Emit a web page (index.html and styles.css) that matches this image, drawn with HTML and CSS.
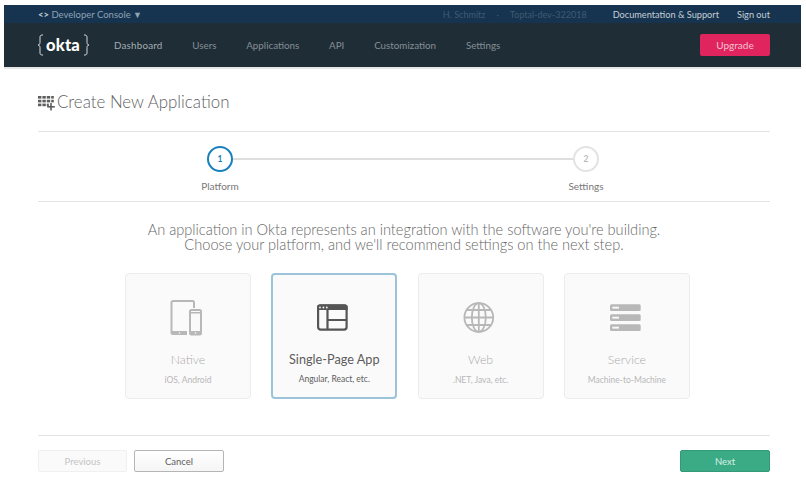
FILE: index.html
```html
<!DOCTYPE html>
<html lang="en">
<head>
<meta charset="utf-8">
<title>Create New Application</title>
<link rel="stylesheet" href="styles.css">
</head>
<body>
<header class="header">
  <div class="topbar">
    <div class="console"><span class="code">&lt;&gt;</span> Developer Console <span class="caret">▼</span></div>
    <div class="org"><span>H. Schmitz</span><span>·</span><span>Toptal-dev-322018</span></div>
    <a class="toplink toplink-docs">Documentation &amp; Support</a>
    <a class="toplink">Sign out</a>
  </div>
  <div class="mainbar">
    <div class="logo">
      <svg class="brace" width="7" height="22" viewBox="0 0 7 22"><path d="M6 1H5C3.800 1 3 1.800 3 3v5.500C3 10 2.200 11 1 11c1.200 0 2 1 2 2.500V19c0 1.200.8 2 2 2h1" fill="none" stroke="#e8ecee" stroke-width=".9"/></svg>
      <span class="logotext">okta</span>
      <svg class="brace" width="7" height="22" viewBox="0 0 7 22"><path d="M1 1h1c1.200 0 2 .8 2 2v5.500C4 10 4.800 11 6 11c-1.200 0-2 1-2 2.500V19c0 1.200-.8 2-2 2H1" fill="none" stroke="#e8ecee" stroke-width=".9"/></svg>
    </div>
    <nav class="nav">
      <a class="nav-first">Dashboard</a><a class="dim">Users</a><a class="dim">Applications</a><a class="dim">API</a><a class="dim">Customization</a><a class="dim">Settings</a>
    </nav>
    <a class="upgrade">Upgrade</a>
  </div>
</header>
<main class="page">
  <h1 class="title">
    <svg class="title-icon" width="17" height="16" viewBox="0 0 17 16"><g fill="#5d5d5d"><rect x="0" y="1" width="3.400" height="2.600"/><rect x="4.400" y="1" width="3.400" height="2.600"/><rect x="8.800" y="1" width="3.400" height="2.600"/><rect x="13.200" y="1" width="2.600" height="2.600"/><rect x="0" y="4.800" width="3.400" height="2.600"/><rect x="4.400" y="4.800" width="3.400" height="2.600"/><rect x="8.800" y="4.800" width="3.400" height="2.600"/><rect x="13.200" y="4.800" width="2.600" height="2.600"/><rect x="0" y="8.600" width="3.400" height="2.600"/><rect x="4.400" y="8.600" width="3.400" height="2.600"/><rect x="8.800" y="8.600" width="2" height="2.600"/><rect x="12.200" y="8" width="1.600" height="7.500"/><rect x="9.200" y="11" width="7.600" height="1.600"/></g></svg>
    Create New Application
  </h1>
  <div class="stepper">
    <div class="step step-on"><span class="dot">1</span><span class="step-label">Platform</span></div>
    <span class="track"></span>
    <div class="step"><span class="dot">2</span><span class="step-label">Settings</span></div>
  </div>
  <p class="intro">An application in Okta represents an integration with the software you're building.<br>Choose your platform, and we'll recommend settings on the next step.</p>
  <div class="cards">
    <div class="card">
      <svg class="card-icon" width="36" height="36" viewBox="0 0 36 36"><g fill="none" stroke="#b8b8b8" stroke-width="2"><path d="M17 34H3a1.500 1.500 0 0 1-1.500-1.500V2.500A1.500 1.500 0 0 1 3 1h19.500A1.500 1.500 0 0 1 24 2.500V8"/><rect x="20" y="10" width="11" height="24.500" rx="1.500"/></g><g fill="#b8b8b8"><rect x="2" y="31" width="15" height="3.500"/><rect x="20.500" y="12" width="10" height="1.500"/><rect x="20.500" y="31" width="10" height="3.500"/></g><g fill="#f8f8f8"><circle cx="9.500" cy="33" r=".8"/><circle cx="25.500" cy="33" r=".8"/></g></svg>
      <div class="card-name">Native</div><div class="card-sub">iOS, Android</div>
    </div>
    <div class="card card-on">
      <svg class="card-icon" width="36" height="36" viewBox="0 0 36 36"><rect x="2.100" y="6.400" width="28.500" height="24.200" rx="2.500" fill="none" stroke="#555" stroke-width="2.200"/><path d="M1 8a2.500 2.500 0 0 1 2.500-2.500h25.700A2.500 2.500 0 0 1 31.700 8v3H1z" fill="#555"/><g fill="#f8f8f8"><circle cx="4" cy="8.500" r=".9"/><circle cx="7.400" cy="8.500" r=".9"/><circle cx="10.800" cy="8.500" r=".9"/></g><path d="M11.500 11v19M11.500 21h19" stroke="#555" stroke-width="2.200" fill="none"/></svg>
      <div class="card-name">Single-Page App</div><div class="card-sub">Angular, React, etc.</div>
    </div>
    <div class="card">
      <svg class="card-icon" width="36" height="36" viewBox="0 0 36 36"><g fill="none" stroke="#b8b8b8" stroke-width="1.800"><circle cx="15.800" cy="17.500" r="14.400"/><ellipse cx="15.800" cy="17.500" rx="7" ry="14.400"/><path d="M15.800 3v29M1.400 17.500h28.800M3.500 10h24.600M3.500 25h24.600"/></g></svg>
      <div class="card-name">Web</div><div class="card-sub">.NET, Java, etc.</div>
    </div>
    <div class="card">
      <svg class="card-icon" width="36" height="36" viewBox="0 0 36 36"><g fill="#b8b8b8"><rect x="1" y="4.300" width="30.700" height="6.700" rx="1.500"/><rect x="1" y="14.300" width="30.700" height="6.700" rx="1.500"/><rect x="1" y="24.300" width="30.700" height="6.700" rx="1.500"/></g><g fill="#f8f8f8"><rect x="3.300" y="6.700" width="6.700" height="1.900"/><rect x="3.300" y="16.700" width="6.700" height="1.900"/><rect x="3.300" y="26.700" width="6.700" height="1.900"/></g></svg>
      <div class="card-name">Service</div><div class="card-sub">Machine-to-Machine</div>
    </div>
  </div>
  <footer class="actions">
    <button class="btn btn-prev">Previous</button>
    <button class="btn btn-cancel">Cancel</button>
    <button class="btn btn-next">Next</button>
  </footer>
</main>
</body>
</html>
```
FILE: styles.css
```css
* { box-sizing: border-box; }
html, body { margin: 0; height: 100%; background: #fff; }
body { font-family: Lato, "Open Sans", sans-serif; color: #5d5d5d; overflow: hidden; padding-top: 5px; }
.header { margin: 0 5px 0 4px; box-shadow: 0 2px 0 #e6e6e6; }
.topbar { height: 18px; background: #16344f; display: flex; align-items: center; padding: 0 31px 0 34px; font-size: 9.200px; color: #8fa2b3; }
.console { flex: 1; font-size: 9.500px; }
.code { font-weight: 700; color: #c8d2da; }
.caret { font-size: 9px; line-height: 9px; }
.org { display: flex; gap: 11px; color: #3f5a73; margin-right: 26px; font-size: 9.050px; }
.toplink { color: #c5ced6; }
.toplink-docs { margin-right: 18px; }
.mainbar { height: 44px; background: #1f2d36; display: flex; align-items: center; padding: 0 31px 0 33px; }
.logo { width: 77px; display: flex; align-items: center; gap: 2px; color: #fff; }
.logotext { font-size: 16.500px; font-weight: 900; letter-spacing: .2px; margin-right: 1px; }
.brace { flex: none; margin-top: -1px; }
.nav { flex: 1; display: flex; gap: 29.800px; font-size: 9.800px; color: #a3acb2; }
.nav .dim { color: #858f96; }
.nav-first { letter-spacing: .2px; }
.upgrade { width: 70px; height: 22px; line-height: 23px; text-align: center; background: #e0245e; border-radius: 2px; color: #f4c3d2; font-size: 10px; }
.page { margin: 0 36px 0 38px; padding-top: 25px; }
.title { margin: 0; height: 40px; display: flex; gap: 2px; align-items: flex-start; font-size: 16.900px; line-height: 20px; font-weight: 300; color: #5f5f5f; border-bottom: 1px solid #e3e3e3; }
.title-icon { margin-top: 3px; }
.stepper { height: 70px; padding: 14px 154px 0 152px; display: flex; align-items: flex-start; border-bottom: 1px solid #e3e3e3; }
.step { width: 60px; display: flex; flex-direction: column; align-items: center; gap: 8px; font-size: 10px; color: #777; }
.dot { width: 26px; height: 26px; border: 2px solid #e3e3e3; border-radius: 50%; display: flex; align-items: center; justify-content: center; font-size: 8.500px; font-weight: 700; color: #bbb; background: #fff; }
.step-on .dot { border-color: #1780bd; color: #1780bd; }
.track { flex: 1; height: 2px; margin: 12px -17px 0; background: #dedede; }
.intro { margin: 20px 0 0; font-size: 14.600px; line-height: 15px; text-align: center; font-weight: 300; color: #666; }
.cards { margin: 21px 0 0 87px; display: flex; gap: 20.300px; }
.card { width: 126px; height: 126px; background: #fafafa; border: 1px solid #ececec; border-radius: 4px; display: flex; flex-direction: column; align-items: center; color: #b8b8b8; }
.card-on { border: 2px solid #9cc4d8; color: #5d5d5d; }
.card-icon { margin-top: 26px; }
.card-on .card-icon { margin-top: 24px; }
.card-name { margin-top: 17px; font-size: 12.300px; line-height: 14px; font-weight: 300; color: #aaa; }
.card-on .card-name { font-weight: 400; font-size: 12.700px; color: #5d5d5d; }
.card-sub { margin-top: 8px; font-size: 8.500px; line-height: 11px; }
.actions { margin-top: 36px; padding-top: 14px; height: 49px; border-top: 1px solid #e3e3e3; display: flex; gap: 7px; }
.btn { height: 22px; width: 89px; border-radius: 2px; font: 9.500px Lato, sans-serif; padding: 0; }
.btn-prev { background: #fafafa; border: 1px solid #f0f0f0; color: #c4c4c4; }
.btn-cancel { width: 90px; background: linear-gradient(#fff, #f5f5f5); border: 1px solid #b5b5b5; color: #5d5d5d; }
.btn-next { width: 90px; margin-left: auto; background: #3bab85; border: 1px solid #33997a; color: #d8f0e8; }
```
